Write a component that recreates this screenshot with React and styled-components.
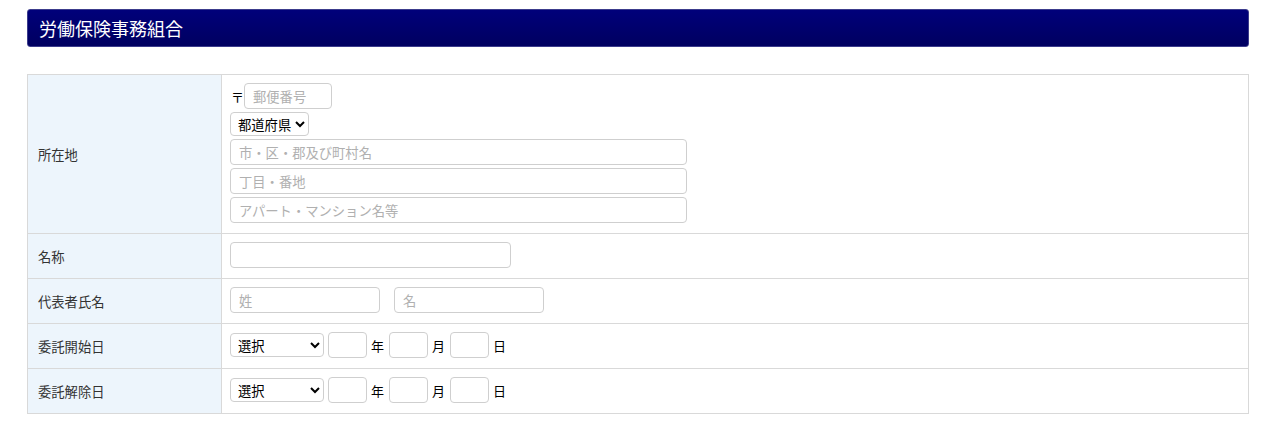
import React from 'react';
import styled, { createGlobalStyle } from 'styled-components';

const GlobalStyle = createGlobalStyle`
  body {
    margin: 0;
    background: #fff;
    font-family: "Noto Sans CJK JP", "Noto Sans", sans-serif;
    color: #333;
  }
`;

const Page = styled.div`
  padding: 9px 25px 20px 27px;
`;

const Heading = styled.h2`
  margin: 0;
  height: 38px;
  box-sizing: border-box;
  padding: 0 11px;
  display: flex;
  align-items: center;
  border: 1px solid #3c3c8c;
  border-radius: 3px;
  background: linear-gradient(#00007a, #000060);
  color: #fff;
  font-size: 18px;
  font-weight: normal;
`;

const Table = styled.table`
  width: 100%;
  margin-top: 27px;
  border-collapse: collapse;
  font-size: 13.3px;
`;

const Label = styled.th`
  width: 173px;
  padding: 0 10px;
  text-align: left;
  font-weight: normal;
  vertical-align: middle;
  background: #edf5fc;
  border: 1px solid #d9d9d9;
`;

const Cell = styled.td`
  padding: 8px 8px 10px;
  border: 1px solid #d9d9d9;
`;

const Stack = styled.div`
  display: flex;
  flex-direction: column;
  align-items: flex-start;
  gap: 3px;
`;

const Line = styled.div`
  display: flex;
  align-items: center;
  gap: ${p => p.$gap || 0}px;
`;

const Input = styled.input`
  box-sizing: border-box;
  width: ${p => p.$w}px;
  height: 26px;
  padding: 0 8px;
  border: 1px solid #cfcfcf;
  border-radius: 4px;
  font: 13.3px "Noto Sans CJK JP", sans-serif;
  color: #333;
  outline: none;
  &::placeholder {
    color: #b0b0b0;
  }
`;

const Select = styled.select`
  box-sizing: border-box;
  width: ${p => p.$w}px;
  height: 24px;
  padding: 0 0 0 3px;
  border: 1px solid #cfcfcf;
  border-radius: 4px;
  background: #fff;
  font: 13.3px "Noto Sans CJK JP", sans-serif;
  color: #000;
`;

const Mark = styled.span`
  font-size: 13px;
  color: #000;
  margin: ${p => p.$m || '0 5px 0 4px'};
`;

const DateField = ({ name }) => (
  <tr>
    <Label>{name}</Label>
    <Cell>
      <Line>
        <Select $w={94} defaultValue="">
          <option value="">選択</option>
          <option>昭和</option>
          <option>平成</option>
          <option>令和</option>
        </Select>
        <Input $w={39} style={{ marginLeft: 4 }} />
        <Mark>年</Mark>
        <Input $w={39} />
        <Mark>月</Mark>
        <Input $w={39} />
        <Mark>日</Mark>
      </Line>
    </Cell>
  </tr>
);

export default function App() {
  return (
    <Page>
      <GlobalStyle />
      <Heading>労働保険事務組合</Heading>
      <Table>
        <tbody>
          <tr>
            <Label>所在地</Label>
            <Cell>
              <Stack>
                <Line>
                  <Mark $m="0 0 0 1px">〒</Mark>
                  <Input $w={88} placeholder="郵便番号" />
                </Line>
                <Select $w={79} defaultValue="">
                  <option value="">都道府県</option>
                  <option>東京都</option>
                  <option>大阪府</option>
                </Select>
                <Input $w={457} placeholder="市・区・郡及び町村名" />
                <Input $w={457} placeholder="丁目・番地" />
                <Input $w={457} placeholder="アパート・マンション名等" />
              </Stack>
            </Cell>
          </tr>
          <tr>
            <Label>名称</Label>
            <Cell>
              <Input $w={281} />
            </Cell>
          </tr>
          <tr>
            <Label>代表者氏名</Label>
            <Cell>
              <Line $gap={14}>
                <Input $w={150} placeholder="姓" />
                <Input $w={150} placeholder="名" />
              </Line>
            </Cell>
          </tr>
          <DateField name="委託開始日" />
          <DateField name="委託解除日" />
        </tbody>
      </Table>
    </Page>
  );
}
